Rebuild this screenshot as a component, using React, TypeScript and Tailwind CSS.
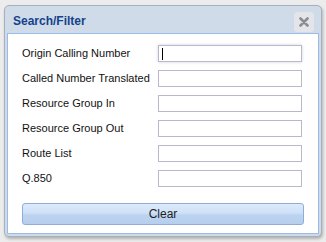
import React from "react";

const labels = [
  "Origin Calling Number",
  "Called Number Translated",
  "Resource Group In",
  "Resource Group Out",
  "Route List",
  "Q.850",
];

export default function App() {
  return (
    <div
      className="w-[326px] h-[242px] bg-[#ececec] pt-[5px] pl-[4px]"
      style={{ fontFamily: '"Liberation Sans", Arial, sans-serif' }}
    >
      <div className="w-[318px] h-[232px] rounded-[5px] border border-[#a7b0bb] bg-[#cfdbe9] shadow-[1px_2px_3px_rgba(0,0,0,0.25)] flex flex-col px-[2px] pb-[2px]">
        <div className="h-[27px] flex items-center justify-between pl-[6px] pr-[5px] shrink-0">
          <span className="text-[12px] font-bold text-[#15428b] mt-[2px]">Search/Filter</span>
          <div className="w-[20px] h-[20px] rounded-[3px] bg-[#e3e5e8] flex items-center justify-center mt-[4px]">
            <svg width="10" height="10" viewBox="0 0 10 10">
              <path d="M1.5 1.5 L8.5 8.5 M8.5 1.5 L1.5 8.5" stroke="#8a8d92" strokeWidth="2.6" strokeLinecap="round" />
            </svg>
          </div>
        </div>
        <div className="flex-1 bg-white border border-[#99bbe8] pl-[14px] pr-[14px] pt-[11px]">
          <div className="flex flex-col gap-[8px]">
            {labels.map((l, i) => (
              <div key={l} className="flex items-center h-[17px]">
                <span className="w-[136px] text-[11px] text-[#111]">{l}</span>
                <div
                  className={
                    "w-[144px] h-[17px] border border-[#b9b9cb] bg-white flex items-center " +
                    (i === 0 ? "shadow-[0_0_3px_rgba(120,120,160,0.35)]" : "")
                  }
                >
                  {i === 0 && <div className="ml-[3px] w-px h-[12px] bg-black" />}
                </div>
              </div>
            ))}
          </div>
          <button className="mt-[16px] w-[282px] h-[22px] rounded-[3px] border border-[#8fadd9] bg-[linear-gradient(#dceafb,#cfe1f8_45%,#bcd3f0_55%,#b7cfee)] text-[12px] text-[#222] flex items-center justify-center">
            Clear
          </button>
        </div>
      </div>
    </div>
  );
}
